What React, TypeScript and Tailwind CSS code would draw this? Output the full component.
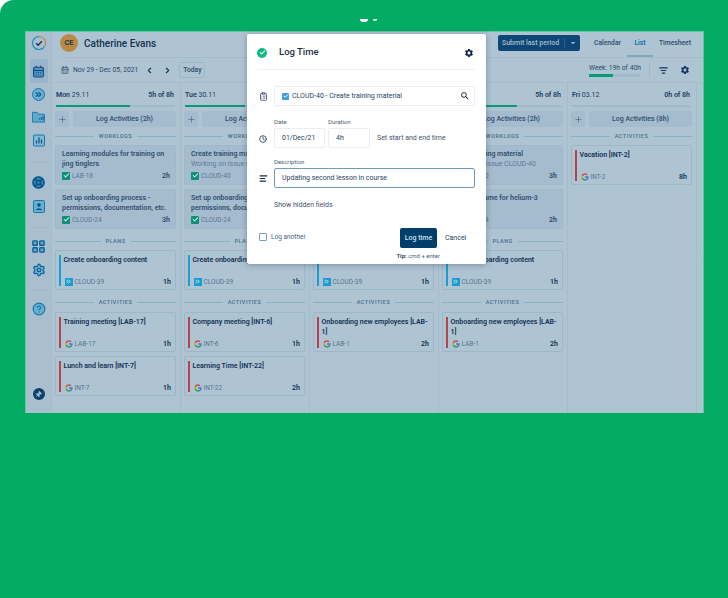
import React from "react";
import {
  AlignLeft,
  CalendarDays,
  Check,
  ChevronDown,
  ChevronLeft,
  ChevronRight,
  ChevronsRight,
  CircleHelp,
  ClipboardList,
  Clock,
  LayoutGrid,
  LifeBuoy,
  ListFilter,
  Pin,
  Plus,
  Settings,
} from "lucide-react";
import { MdSearch, MdSettings } from "react-icons/md";

type Item = { title: string; sub?: string; key: string; hours: string };
type Day = {
  name: string;
  date: string;
  total: string;
  done: number;
  log: string;
  worklogs: Item[];
  plans: Item[];
  activities: Item[];
};

const setup: Item = {
  title: "Set up onboarding process - permissions, documentation, etc.",
  key: "CLOUD-24",
  hours: "3h",
};
const content: Item = { title: "Create onboarding content", key: "CLOUD-39", hours: "1h" };
const training: Item = {
  title: "Create training material",
  sub: "Working on issue CLOUD-40",
  key: "CLOUD-40",
  hours: "3h",
};
const onboarding: Item = { title: "Onboarding new employees [LAB-1]", key: "LAB-1", hours: "2h" };

const days: Day[] = [
  {
    name: "Mon",
    date: "29.11",
    total: "5h of 8h",
    done: 62,
    log: "Log Activities (2h)",
    worklogs: [
      { title: "Learning modules for training on jing tinglers", key: "LAB-18", hours: "2h" },
      setup,
    ],
    plans: [content],
    activities: [
      { title: "Training meeting [LAB-17]", key: "LAB-17", hours: "1h" },
      { title: "Lunch and learn [INT-7]", key: "INT-7", hours: "1h" },
    ],
  },
  {
    name: "Tue",
    date: "30.11",
    total: "5h of 8h",
    done: 50,
    log: "Log Activities (2h)",
    worklogs: [training, setup],
    plans: [content],
    activities: [
      { title: "Company meeting [INT-6]", key: "INT-6", hours: "1h" },
      { title: "Learning Time [INT-22]", key: "INT-22", hours: "2h" },
    ],
  },
  {
    name: "Wed",
    date: "01.12",
    total: "5h of 8h",
    done: 62,
    log: "Log Activities (2h)",
    worklogs: [training, setup],
    plans: [content],
    activities: [onboarding],
  },
  {
    name: "Thu",
    date: "02.12",
    total: "5h of 8h",
    done: 62,
    log: "Log Activities (2h)",
    worklogs: [
      training,
      { title: "Choose a name for helium-3", key: "CLOUD-24", hours: "2h" },
    ],
    plans: [content],
    activities: [onboarding],
  },
  {
    name: "Fri",
    date: "03.12",
    total: "0h of 8h",
    done: 0,
    log: "Log Activities (8h)",
    worklogs: [],
    plans: [],
    activities: [{ title: "Vacation [INT-2]", key: "INT-2", hours: "8h" }],
  },
];

const GoogleG = () => (
  <svg viewBox="0 0 24 24" className="h-[8px] w-[8px] shrink-0">
    <path fill="#3f7fd0" d="M23 12.3c0-.8-.1-1.600-.2-2.300H12v4.400h6.200c-.3 1.400-1.100 2.600-2.300 3.400v2.800h3.700C21.700 18.600 23 15.700 23 12.300z" />
    <path fill="#3f9a62" d="M12 23c3.100 0 5.700-1 7.600-2.800l-3.700-2.800c-1 .7-2.300 1.100-3.900 1.100-3 0-5.500-2-6.400-4.700H1.800v2.900C3.600 20.300 7.500 23 12 23z" />
    <path fill="#d2ac36" d="M5.600 13.800c-.5-1.200-.5-2.500 0-3.700V7.200H1.800c-1.600 3-1.600 6.500 0 9.500l3.800-2.900z" />
    <path fill="#c7504a" d="M12 5.400c1.700 0 3.200.6 4.400 1.700l3.300-3.300C17.700 2 15.100 1 12 1 7.500 1 3.600 3.700 1.800 7.200l3.800 2.900c.9-2.700 3.400-4.700 6.400-4.700z" />
  </svg>
);

const KeyIcon = ({ kind }: { kind: "work" | "plan" | "activity" }) => {
  if (kind === "activity") return <GoogleG />;
  if (kind === "plan")
    return (
      <span className="flex h-[8px] w-[8px] shrink-0 items-center justify-center bg-[#1d9bd0]">
        <ChevronsRight className="h-[7px] w-[7px] text-[#d6ecf5]" strokeWidth={3} />
      </span>
    );
  return (
    <span className="flex h-[8px] w-[8px] shrink-0 items-center justify-center rounded-[1px] bg-[#108f78]">
      <Check className="h-[7px] w-[7px] text-[#e2f1ee]" strokeWidth={3.5} />
    </span>
  );
};

const WorklogCard = ({ item }: { item: Item }) => (
  <div className="flex h-[40px] flex-col rounded-[2px] border-[1.5px] border-[#9fb8ca] bg-[#a5bccf] px-[6px] pt-[2.5px]">
    <div className="h-[20px] text-[7px] leading-[10px] font-semibold text-[#314f6c]">
      <div className={item.sub ? "truncate" : "line-clamp-2"}>{item.title}</div>
      {item.sub && <div className="truncate font-normal text-[#5d7a93]">{item.sub}</div>}
    </div>
    <div className="mt-auto mb-[4.5px] flex h-[8px] items-center">
      <KeyIcon kind="work" />
      <span className="ml-[2px] text-[6.5px] leading-[8px] text-[#597791]">{item.key}</span>
      <span className="mr-[-1px] ml-auto text-[7px] leading-[8px] font-semibold text-[#2c4a68]">{item.hours}</span>
    </div>
  </div>
);

const BarCard = ({ item, kind }: { item: Item; kind: "plan" | "activity" }) => (
  <div className="flex h-[40px] rounded-[2px] border-[1.5px] border-[#9db7c9] bg-[#afc4d3] py-[3.5px] pr-[4px] pl-[2.5px]">
    <span className={`w-[2px] shrink-0 ${kind === "plan" ? "bg-[#1b9dcf]" : "bg-[#b4434f]"}`} />
    <div className="ml-[3px] flex min-w-0 flex-1 flex-col">
      <div className="text-[7px] leading-[10px] font-semibold text-[#123152]">{item.title}</div>
      <div className="mt-auto ml-[1px] flex h-[8px] items-center">
        <KeyIcon kind={kind} />
        <span className="ml-[2px] text-[6.5px] leading-[8px] text-[#55748f]">{item.key}</span>
        <span className="ml-auto text-[7px] leading-[8px] font-semibold text-[#123152]">{item.hours}</span>
      </div>
    </div>
  </div>
);

const SectionLabel = ({ text, className }: { text: string; className: string }) => (
  <div className={`flex items-center gap-[5px] ${className}`}>
    <span className="h-px flex-1 bg-[#8eb0c4]" />
    <span className="text-[5.5px] font-semibold tracking-[0.5px] text-[#4d7490]">{text}</span>
    <span className="h-px flex-1 bg-[#8eb0c4]" />
  </div>
);

const DayColumn = ({ day }: { day: Day }) => (
  <div className="w-[129px] shrink-0 border-r border-[#a6bccd] pr-[4px] pl-[3px]">
    <div className="flex h-[22px] items-center justify-between px-[1px] pt-[2px] pr-[2px] text-[7px] text-[#1d3d5c]">
      <span>
        <b className="font-semibold">{day.name}</b> {day.date}
      </span>
      <span className="font-semibold">{day.total}</span>
    </div>
    <div className="mx-[1px] h-[2px] bg-[#a0b9cb]">
      <div className="h-full bg-[#0b9a78]" style={{ width: `${day.done}%` }} />
    </div>
    <div className="mt-[4px] flex h-[16px] gap-[4px]">
      <button className="flex w-[14px] items-center justify-center rounded-[2px] bg-[#a5bccf] text-[#4f6f8b]">
        <Plus className="h-[9px] w-[9px]" />
      </button>
      <div className="flex flex-1 items-center justify-center rounded-[2px] bg-[#a5bccf] text-[7px] font-medium text-[#2f4e6c]">
        {day.log}
      </div>
    </div>
    {day.worklogs.length > 0 && (
      <>
        <SectionLabel text="WORKLOGS" className="h-[18px]" />
        <div className="flex flex-col gap-[4px]">
          {day.worklogs.map((item) => (
            <WorklogCard key={item.title} item={item} />
          ))}
        </div>
      </>
    )}
    {day.plans.length > 0 && (
      <>
        <SectionLabel text="PLANS" className="h-[21px] pt-[3px]" />
        {day.plans.map((item) => (
          <BarCard key={item.title} item={item} kind="plan" />
        ))}
      </>
    )}
    <SectionLabel text="ACTIVITIES" className={day.plans.length ? "h-[22px] pt-[3px]" : "h-[18px]"} />
    <div className="flex flex-col gap-[4px]">
      {day.activities.map((item) => (
        <BarCard key={item.title} item={item} kind="activity" />
      ))}
    </div>
  </div>
);

const Sidebar = () => (
  <div className="flex w-[26px] shrink-0 flex-col items-center border-r border-[#a6bccd] bg-[#a9bfd0] pt-[3px] pb-[13px]">
    <svg viewBox="0 0 16 16" className="h-[16px] w-[16px]" fill="none">
      <path d="M8 1.500a6.500 6.500 0 0 1 5.500 10" stroke="#b98a45" strokeWidth="1.200" />
      <path d="M13.500 11.500A6.500 6.500 0 1 1 8 1.500" stroke="#2391b5" strokeWidth="1.200" />
      <path d="M5.200 8.200l2 2 3.600-4" stroke="#12355c" strokeWidth="1.500" />
    </svg>
    <div className="mt-[8px] flex h-[24px] w-[18px] items-center justify-center rounded-[2px] bg-[#9ab5c9]">
      <CalendarDays className="h-[13px] w-[13px] fill-[#4d95c0] text-[#0f4d84]" />
    </div>
    <span className="mt-[5px] flex h-[13px] w-[13px] items-center justify-center rounded-full border border-[#1878a8] bg-[#66afd0]">
      <ChevronsRight className="h-[9px] w-[9px] text-[#0f4d84]" strokeWidth={3} />
    </span>
    <svg viewBox="0 0 14 12" className="mt-[10px] h-[12px] w-[13px]">
      <path d="M.500 1h5l1.500 2h6.500v8.500H.500z" fill="#5eaacd" stroke="#1878a8" />
      <path d="M8 9V7.500M10 9V6M12 9V5" stroke="#0f4d84" />
    </svg>
    <svg viewBox="0 0 12 12" className="mt-[11px] h-[13px] w-[12px]">
      <rect x=".5" y=".5" width="11" height="11" rx="1" fill="#7fbad6" stroke="#1878a8" />
      <path d="M3.500 9V6M6 9V3M8.500 9V5" stroke="#0f4d84" strokeWidth="1.200" />
    </svg>
    <div className="mt-[15px] h-px w-[18px] bg-[#a0b8ca]" />
    <LifeBuoy className="mt-[13px] h-[13px] w-[13px] rounded-full bg-[#2a8ab8] text-[#0f4d84]" strokeWidth={2.5} />
    <svg viewBox="0 0 12 13" className="mt-[11px] h-[13px] w-[12px]">
      <rect x=".5" y=".5" width="11" height="12" rx="1" fill="#66afd0" stroke="#1878a8" />
      <circle cx="6" cy="5" r="1.800" fill="#0f4d84" />
      <path d="M3 10c0-2 6-2 6 0z" fill="#0f4d84" />
    </svg>
    <div className="mt-[14px] h-px w-[18px] bg-[#a0b8ca]" />
    <LayoutGrid className="mt-[11px] h-[15px] w-[15px] fill-[#5eaacd] text-[#0f5f92]" strokeWidth={2.2} />
    <Settings className="mt-[9px] h-[14px] w-[14px] fill-[#66afd0] text-[#0f5f92]" />
    <div className="mt-[13px] h-px w-[18px] bg-[#a0b8ca]" />
    <CircleHelp className="mt-[11px] h-[14px] w-[14px] fill-[#66afd0] text-[#1878a8]" />
    <span className="mt-auto flex h-[12px] w-[12px] items-center justify-center rounded-full bg-[#0d3f6b]">
      <Pin className="h-[7px] w-[7px] rotate-45 fill-[#a9bfd0] text-[#a9bfd0]" />
    </span>
  </div>
);

const TopBar = () => (
  <div className="flex h-[51px] shrink-0 flex-col border-b border-[#a6bccd] pl-[8px]">
    <div className="flex h-[26px] items-center border-b border-[#a6bccd] pr-[12px] pb-[3px]">
      <span className="flex h-[18px] w-[18px] items-center justify-center rounded-full bg-[#b98a45] text-[7.5px] font-semibold text-[#24344a]">
        CE
      </span>
      <span className="ml-[6px] text-[10px] font-medium text-[#15324f]">Catherine Evans</span>
      <div className="ml-auto flex h-[16px] w-[82px] items-center rounded-[2px] bg-[#0e4775] pl-[4px] text-[7px] font-medium whitespace-nowrap text-[#a6bccd]">
        Submit last period
        <span className="mx-[5px] h-[10px] w-px bg-[#2d6088]" />
        <ChevronDown className="h-[6px] w-[6px] fill-[#c6d4de] text-[#c6d4de]" strokeWidth={3} />
      </div>
      <div className="-mb-[3px] ml-[14px] flex items-center self-stretch text-[6.75px] font-medium text-[#2d4c6a]">
        <span className="pb-[3px]">Calendar</span>
        <span className="ml-[6px] flex w-[26px] items-center justify-center self-stretch border-b-2 border-[#7fa8c0] pb-[1px] font-semibold text-[#12709f]">
          List
        </span>
        <span className="ml-[6px] pb-[3px]">Timesheet</span>
      </div>
    </div>
    <div className="flex flex-1 items-center pr-[13px] text-[6.75px] text-[#2a4967]">
      <CalendarDays className="ml-[1px] h-[8px] w-[8px] text-[#28476a]" />
      <span className="ml-[4px]">Nov 29 - Dec 05, 2021</span>
      <ChevronLeft className="ml-[7px] h-[9px] w-[9px] text-[#12355c]" strokeWidth={3} />
      <ChevronRight className="ml-[9px] h-[9px] w-[9px] text-[#12355c]" strokeWidth={3} />
      <span className="ml-[7px] flex h-[16px] w-[26px] items-center justify-center rounded-[2px] border border-[#9db7c9] font-medium">
        Today
      </span>
      <div className="ml-auto flex w-[51px] flex-col gap-[1px]">
        <span className="whitespace-nowrap">Week: 19h of 40h</span>
        <div className="h-[2.5px] bg-[#a0b9cb]">
          <div className="h-full w-[48%] bg-[#0b9a78]" />
        </div>
      </div>
      <span className="mx-[9px] h-[16px] w-px bg-[#a0b8ca]" />
      <ListFilter className="h-[9px] w-[9px] text-[#12355c]" strokeWidth={3} />
      <MdSettings className="ml-[12px] h-[10px] w-[10px] text-[#12355c]" />
    </div>
  </div>
);

const Field = ({ className, children }: { className: string; children: React.ReactNode }) => (
  <div className={`flex h-[20px] items-center rounded-[2px] border text-[7px] text-[#26435f] ${className}`}>
    {children}
  </div>
);

const LogTimeModal = () => (
  <div className="absolute top-[2px] left-[221px] flex h-[230px] w-[239px] flex-col rounded-[2px] bg-white px-[11px] shadow-[0_1px_6px_rgba(20,50,80,0.35)]">
    <div className="flex h-[36px] items-center border-b border-[#eef2f6] pt-[2px]">
      <span className="ml-[-1px] flex h-[10px] w-[10px] items-center justify-center rounded-full bg-[#12b886]">
        <Check className="h-[7px] w-[7px] text-white" strokeWidth={3.5} />
      </span>
      <span className="ml-[12px] text-[9.5px] font-medium text-[#1f2f45]">Log Time</span>
      <MdSettings className="mr-[1px] ml-auto h-[10px] w-[10px] text-[#0f2440]" />
    </div>
    <div className="mt-[16px] flex items-center">
      <ClipboardList className="ml-[1px] h-[9px] w-[9px] text-[#2a3a4f]" />
      <Field className="ml-[6px] flex-1 border-[#e8eef3] pl-[7px]">
        <span className="flex h-[7px] w-[7px] items-center justify-center rounded-[1px] bg-[#3e9ddb]">
          <Check className="h-[6px] w-[6px] text-white" strokeWidth={4} />
        </span>
        <span className="ml-[3px]">CLOUD-40 - Create training material</span>
        <MdSearch className="mr-[4px] ml-auto h-[10px] w-[10px] text-[#12263f]" />
      </Field>
    </div>
    <div className="mt-[11px] flex items-end">
      <Clock className="mb-[5px] ml-[1px] h-[8px] w-[8px] text-[#2a3a4f]" strokeWidth={2.5} />
      <div className="ml-[7px] flex flex-col">
        <span className="mb-[2px] text-[6px] leading-[9px] text-[#4a6078]">Date</span>
        <Field className="w-[51px] border-[#e8eef3] pl-[7px]">01/Dec/21</Field>
      </div>
      <div className="ml-[3px] flex flex-col">
        <span className="mb-[2px] text-[6px] leading-[9px] text-[#4a6078]">Duration</span>
        <Field className="w-[42px] border-[#e8eef3] pl-[7px]">4h</Field>
      </div>
      <span className="mb-[5px] ml-[7px] text-[7px] text-[#3f5269]">Set start and end time</span>
    </div>
    <div className="mt-[9px] flex items-end">
      <AlignLeft className="mb-[5px] ml-[1px] h-[9px] w-[9px] text-[#1a2b40]" strokeWidth={3} />
      <div className="ml-[6px] flex flex-1 flex-col">
        <span className="mb-[2px] text-[6px] leading-[9px] text-[#4a6078]">Description</span>
        <Field className="border-[#6f9abb] pl-[7px]">Updating second lesson in course</Field>
      </div>
    </div>
    <div className="mt-[12px] ml-[16px] text-[7px] leading-[10px] text-[#3f5269]">Show hidden fields</div>
    <div className="mt-[18px] flex items-start">
      <span className="mt-[5px] ml-[1px] h-[8px] w-[8px] rounded-[1px] border border-[#7d9db6]" />
      <span className="mt-[4px] ml-[4px] text-[6.5px] leading-[10px] text-[#3f5f7a]">Log another</span>
      <div className="ml-auto flex items-center">
        <span className="flex h-[20px] w-[37px] items-center justify-center rounded-[2px] bg-[#003e6b] text-[7px] font-medium text-[#cfe0ec]">
          Log time
        </span>
        <span className="mr-[9px] ml-[8px] w-[21px] text-[7px] text-[#26435f]">Cancel</span>
      </div>
    </div>
    <div className="mt-[4px] mr-[35px] self-end text-[6px] leading-[8px] text-[#4a6078]">
      <b className="font-semibold text-[#26435f]">Tip:</b> cmd + enter
    </div>
  </div>
);

export default function App() {
  return (
    <div className="relative h-[598px] w-[728px] overflow-hidden bg-white font-['Roboto',sans-serif]">
      <div className="h-full rounded-tl-[14px] bg-[#03ac62] pt-[31px] pl-[25px]">
        <div className="relative flex h-[382px] w-[679px] border-x border-t border-x-[#62c4a0] border-t-[#62c4a0] bg-[#afc4d3]">
          <Sidebar />
          <div className="flex min-w-0 flex-1 flex-col">
            <TopBar />
            <div className="flex flex-1">
              {days.map((day) => (
                <DayColumn key={day.name} day={day} />
              ))}
              <div className="flex flex-1 items-start justify-center pt-[168px]">
                <ChevronLeft className="h-[8px] w-[6px] text-[#9fb8ca]" strokeWidth={3} />
              </div>
            </div>
          </div>
          <LogTimeModal />
        </div>
      </div>
      <span className="absolute top-[19px] left-[360px] h-[3px] w-[8px] rounded-b-full bg-white" />
      <span className="absolute top-[19px] left-[373px] h-[2px] w-[4px] rounded-b-full bg-white" />
    </div>
  );
}
